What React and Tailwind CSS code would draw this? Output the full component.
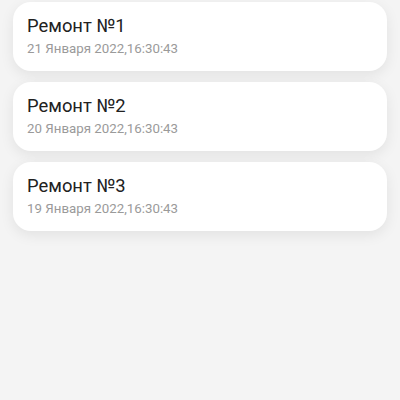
import React from 'react';

const repairs = [
  { id: 1, title: 'Ремонт №1', date: '21 Января 2022,16:30:43' },
  { id: 2, title: 'Ремонт №2', date: '20 Января 2022,16:30:43' },
  { id: 3, title: 'Ремонт №3', date: '19 Января 2022,16:30:43' },
];

export default function App() {
  return (
    <div className="w-[400px] h-[400px] bg-[#f4f4f4] font-['Roboto',sans-serif] overflow-hidden">
      <ul className="flex flex-col gap-[11px] px-[13px] pt-[2px]">
        {repairs.map(r => (
          <li key={r.id}
            className="h-[69px] rounded-[18px] bg-white pl-[14px] pt-[12px] shadow-[0_4px_14px_rgba(0,0,0,0.08)]">
            <div className="text-[18.4px] leading-[24px] text-[#212121]">{r.title}</div>
            <div className="mt-[2px] text-[13.3px] leading-[18px] text-[#9a9a9a]">{r.date}</div>
          </li>
        ))}
      </ul>
    </div>
  );
}
